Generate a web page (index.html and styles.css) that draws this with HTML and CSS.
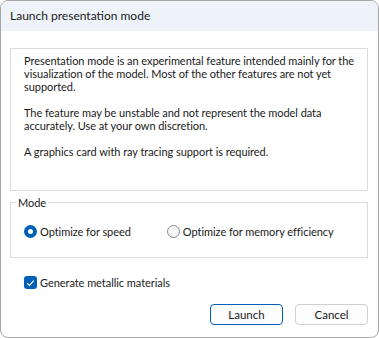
FILE: index.html
```html
<!DOCTYPE html>
<html>
<head>
  <meta charset="UTF-8">
  <link rel="stylesheet" href="styles.css">
</head>
<body>
  <div class="window">
    <div class="titlebar">Launch presentation mode</div>

    <div class="content">
      <div class="info-box">
        <p>Presentation mode is an experimental feature intended mainly for the visualization of the model. Most of the other features are not yet supported.</p>
        <p>The feature may be unstable and not represent the model data accurately. Use at your own discretion.</p>
        <p>A graphics card with ray tracing support is required.</p>
      </div>

      <fieldset class="group">
        <legend>Mode</legend>
        <div class="radio-row">
          <label class="radio checked"><span class="radio-mark"></span>Optimize for speed</label>
          <label class="radio"><span class="radio-mark"></span>Optimize for memory efficiency</label>
        </div>
      </fieldset>

      <label class="check">
        <span class="check-mark">
          <svg width="9" height="8" viewBox="0 0 9 8" fill="none" stroke="#fff" stroke-width="1.2">
            <polyline points="1.2 4.3 3.4 6.4 7.8 1.6"></polyline>
          </svg>
        </span>
        Generate metallic materials
      </label>

      <div class="buttons">
        <button class="btn primary">Launch</button>
        <button class="btn">Cancel</button>
      </div>
    </div>
  </div>
</body>
</html>
```

FILE: styles.css
```css
:root {
  --accent: #005fb8;
  --text: #1a1a1a;
  --line: #dcdcdc;
  --title-bg: #eef3f9;
}

body {
  margin: 0;
  background: #fff;
  font-family: 'Lato', 'Noto Sans', sans-serif;
  font-size: 11px;
  letter-spacing: -0.05px;
  color: var(--text);
}

.window {
  width: 379px;
  height: 338px;
  box-sizing: border-box;
  border: 1px solid #a6a6a6;
  border-radius: 8px;
  overflow: hidden;
  background: #fff;
}

.titlebar {
  height: 30px;
  line-height: 30px;
  padding-left: 9px;
  font-size: 12px;
  letter-spacing: 0;
  background: var(--title-bg);
  color: #1a1a1a;
}

.content {
  padding: 17px 10px 0 9px;
}

.info-box {
  height: 143px;
  box-sizing: border-box;
  border: 1px solid var(--line);
  padding: 5px 4px 0 13px;
  line-height: 13px;
}

.info-box p {
  margin: 0 0 13px 0;
}

.group {
  margin: 5px 0 0 0;
  padding: 0 0 0 5px;
  height: 62px;
  box-sizing: border-box;
  border: 1px solid var(--line);
  min-width: 0;
}

.group legend {
  padding: 0 2px;
  line-height: 13px;
}

.radio-row {
  display: flex;
  margin-top: 16px;
  margin-left: 8px;
}

.radio {
  display: flex;
  align-items: center;
  gap: 3px;
  line-height: 13px;
}

.radio + .radio {
  margin-left: 36px;
}

.radio-mark {
  width: 13px;
  height: 13px;
  box-sizing: border-box;
  border-radius: 50%;
  border: 1px solid #8a8a8a;
  background: #f6f6f6;
}

.radio.checked .radio-mark {
  border: 4px solid var(--accent);
  background: #fff;
}

.check {
  display: flex;
  align-items: center;
  gap: 3px;
  margin: 18px 0 0 14px;
  line-height: 13px;
}

.check-mark {
  width: 13px;
  height: 13px;
  border-radius: 3px;
  background: var(--accent);
  display: flex;
  align-items: center;
  justify-content: center;
}

.buttons {
  display: flex;
  justify-content: flex-end;
  gap: 12px;
  margin-top: 15px;
}

.btn {
  width: 73px;
  height: 21px;
  padding: 0;
  border: 1px solid #d0d0d0;
  border-radius: 4px;
  background: #fdfdfd;
  font-family: inherit;
  font-size: 11.5px;
  color: var(--text);
}

.btn.primary {
  border-color: var(--accent);
}
```
